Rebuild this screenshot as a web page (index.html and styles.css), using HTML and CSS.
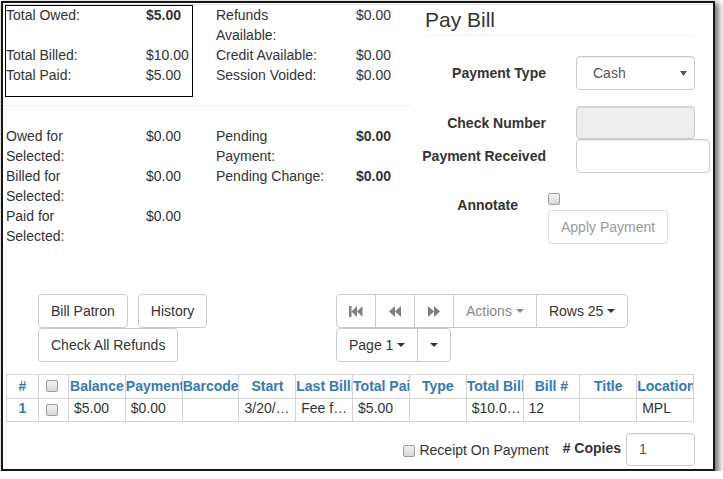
FILE: index.html
```html
<!DOCTYPE html>
<html lang="en">
<head>
<meta charset="utf-8">
<title>Pay Bill</title>
<link rel="stylesheet" href="styles.css">
</head>
<body>
<div class="frame">
  <div class="highlight"></div>
  <div class="page">
    <div class="top">
      <div class="summary">
        <div class="stats">
          <div class="lbl">Total Owed:</div><div class="val b">$5.00</div><div class="lbl">Refunds Available:</div><div class="val">$0.00</div>
          <div class="lbl">Total Billed:</div><div class="val">$10.00</div><div class="lbl">Credit Available:</div><div class="val">$0.00</div>
          <div class="lbl">Total Paid:</div><div class="val">$5.00</div><div class="lbl">Session Voided:</div><div class="val">$0.00</div>
        </div>
        <hr class="rule">
        <div class="stats">
          <div class="lbl">Owed for Selected:</div><div class="val">$0.00</div><div class="lbl">Pending Payment:</div><div class="val b">$0.00</div>
          <div class="lbl">Billed for Selected:</div><div class="val">$0.00</div><div class="lbl">Pending Change:</div><div class="val b">$0.00</div>
          <div class="lbl">Paid for Selected:</div><div class="val">$0.00</div><div></div><div></div>
        </div>
      </div>
      <div class="paybill">
        <h3 class="title">Pay Bill</h3>
        <div class="form-row row-type">
          <label>Payment Type</label>
          <div class="select"><span>Cash</span><svg width="7" height="5" viewBox="0 0 7 5"><path d="M0 0h7L3.5 5z" fill="#555"/></svg></div>
        </div>
        <div class="form-row row-check">
          <label>Check Number</label>
          <div class="input input-check"></div>
        </div>
        <div class="form-row">
          <label>Payment Received</label>
          <div class="input input-recv"></div>
        </div>
        <div class="form-row row-annot">
          <label>Annotate</label>
          <div class="annot-ctl">
            <span class="cb"></span>
            <button class="btn btn-apply">Apply Payment</button>
          </div>
        </div>
      </div>
    </div>

    <div class="toolbar">
      <div class="left-btns">
        <button class="btn">Bill Patron</button>
        <button class="btn">History</button>
        <button class="btn">Check All Refunds</button>
      </div>
      <div class="right-btns">
        <div class="btn-group">
          <button class="btn btn-icon"><svg width="14" height="11" viewBox="0 0 14 11"><rect x="0" y="0" width="2.5" height="11"/><path d="M2.5 5.5 8 0v11zM8 5.5 13.5 0v11z"/></svg></button>
          <button class="btn btn-icon"><svg width="12" height="11" viewBox="0 0 12 11"><path d="M0 5.5 6 0v11zM6 5.5 12 0v11z"/></svg></button>
          <button class="btn btn-icon"><svg width="12" height="11" viewBox="0 0 12 11"><path d="M12 5.5 6 0v11zM6 5.5 0 0v11z"/></svg></button>
          <button class="btn dis">Actions<span class="caret"></span></button>
          <button class="btn">Rows 25<span class="caret"></span></button>
        </div>
        <div class="btn-group">
          <button class="btn">Page 1<span class="caret"></span></button>
          <button class="btn btn-split"><span class="caret caret-only"></span></button>
        </div>
      </div>
    </div>

    <div class="tbl">
      <div class="th">#</div>
      <div class="th th-cb"><span class="cb"></span></div>
      <div class="th">Balance</div>
      <div class="th">Payment</div>
      <div class="th">Barcode</div>
      <div class="th">Start</div>
      <div class="th">Last Billing Type</div>
      <div class="th">Total Paid</div>
      <div class="th">Type</div>
      <div class="th">Total Billed</div>
      <div class="th">Bill #</div>
      <div class="th">Title</div>
      <div class="th">Location</div>

      <div class="td td-num">1</div>
      <div class="td td-cb"><span class="cb"></span></div>
      <div class="td">$5.00</div>
      <div class="td">$0.00</div>
      <div class="td"></div>
      <div class="td">3/20/…</div>
      <div class="td">Fee f…</div>
      <div class="td">$5.00</div>
      <div class="td"></div>
      <div class="td">$10.0…</div>
      <div class="td">12</div>
      <div class="td"></div>
      <div class="td">MPL</div>
    </div>

    <div class="foot">
      <span class="cb cb-receipt"></span>
      <span class="receipt">Receipt On Payment</span>
      <label class="copies">#&nbsp;Copies</label>
      <div class="input input-copies">1</div>
    </div>
  </div>
</div>
</body>
</html>
```

FILE: styles.css
```css
* { box-sizing: border-box; }
html, body { margin: 0; background: #fff; }
body {
  font-family: "Liberation Sans", Arial, sans-serif;
  font-size: 14px;
  line-height: 20px;
  color: #333;
}

.frame {
  position: relative;
  margin: 1px 0 0 1px;
  width: 714px;
  height: 470px;
  border: 2px solid #161616;
  background: #fff;
  box-shadow: 3px 3px 6px 1px rgba(0, 0, 0, 0.55);
}
.highlight {
  position: absolute;
  left: 2px;
  top: 2px;
  width: 188px;
  height: 92px;
  border: 1px solid #000;
  pointer-events: none;
}
.page {
  margin-top: 1px;
  border-top: 1px solid #e2e2e2;
}

/* top area */
.top { display: flex; }
.summary { flex: 0 0 407px; padding-left: 3px; }
.stats {
  display: grid;
  grid-template-columns: 140px 70px 140px 54px;
}
.stats .lbl { padding-right: 30px; }
.b { font-weight: bold; }
.rule {
  margin: 20px 0 20px -3px;
  border: 0;
  border-top: 1px solid #eee;
  height: 0;
}

.paybill { flex: 1; }
.title {
  margin: 3px 0 0 15px;
  width: 270px;
  font-size: 21px;
  font-weight: normal;
  line-height: 24px;
  padding-bottom: 3px;
  border-bottom: 1px solid #eee;
}
.form-row {
  display: grid;
  grid-template-columns: 136px 1fr;
  column-gap: 30px;
  align-items: center;
}
.form-row > label {
  font-weight: bold;
  text-align: right;
  white-space: nowrap;
}
.row-type { margin-top: 20px; }
.row-check { margin-top: 16px; }
.select {
  display: flex;
  align-items: center;
  justify-content: space-between;
  width: 119px;
  height: 34px;
  padding: 0 7px 0 16px;
  border: 1px solid #ccc;
  border-radius: 4px;
  color: #555;
  box-shadow: inset 0 1px 1px rgba(0, 0, 0, 0.075);
}
.input {
  height: 34px;
  border: 1px solid #ccc;
  border-radius: 4px;
  background: #fff;
  box-shadow: inset 0 1px 1px rgba(0, 0, 0, 0.075);
}
.input-check { width: 119px; height: 33px; background: #eee; }
.input-recv { width: 134px; }
.row-annot {
  margin-top: 20px;
  grid-template-columns: 108px 1fr;
  align-items: start;
}
.row-annot > label { margin-top: 2px; }
.annot-ctl { display: flex; flex-direction: column; align-items: flex-start; }

.cb {
  display: inline-block;
  width: 12px;
  height: 12px;
  border: 1px solid #9c9c9c;
  border-radius: 2px;
  background: linear-gradient(#f4f4f4, #d8d8d8);
}

/* buttons */
.btn {
  display: inline-flex;
  align-items: center;
  justify-content: center;
  height: 34px;
  padding: 0 12px;
  margin: 0;
  border: 1px solid #ccc;
  border-radius: 4px;
  background: #fff;
  color: #333;
  font-family: inherit;
  font-size: 14px;
  line-height: 20px;
  white-space: nowrap;
}
.btn-apply {
  margin-top: 5px;
  color: #999;
  border-color: #ddd;
}
.dis { color: #888; }
.caret {
  display: inline-block;
  width: 0;
  height: 0;
  margin-left: 4px;
  border-top: 4px solid;
  border-left: 4px solid transparent;
  border-right: 4px solid transparent;
}
.caret-only { margin-left: 0; }
.btn-split { width: 34px; padding: 0; }
.btn-icon { width: 40px; padding: 0; }
.btn-icon svg { fill: #808080; }

.btn-group { display: flex; }
.btn-group .btn + .btn { margin-left: -1px; }
.btn-group .btn:not(:first-child) { border-top-left-radius: 0; border-bottom-left-radius: 0; }
.btn-group .btn:not(:last-child) { border-top-right-radius: 0; border-bottom-right-radius: 0; }

.toolbar {
  display: flex;
  align-items: flex-start;
  margin-top: 48px;
  padding-left: 35px;
}
.left-btns {
  width: 298px;
  display: flex;
  flex-wrap: wrap;
  column-gap: 10px;
}
.right-btns {
  width: 300px;
  display: flex;
  flex-wrap: wrap;
}

/* table */
.tbl {
  margin: 12px 0 0 3px;
  width: 688px;
  display: grid;
  grid-template-columns: 32px 30px repeat(11, minmax(0, 1fr));
  border-top: 1px solid #d4d4d4;
  border-left: 1px solid #d4d4d4;
}
.th, .td {
  border-right: 1px solid #d4d4d4;
  border-bottom: 1px solid #d4d4d4;
  white-space: nowrap;
  overflow: hidden;
}
.th {
  height: 24px;
  line-height: 23px;
  font-weight: bold;
  color: #337ab7;
  text-align: center;
}
.td {
  height: 23px;
  line-height: 19px;
  padding: 0 0 0 5px;
  text-overflow: clip;
}
.th-cb, .td-cb {
  display: flex;
  align-items: center;
  justify-content: center;
  padding: 0;
}
.th-cb .cb, .td-cb .cb { margin-right: 3px; }
.th-cb .cb { margin-top: -1px; }
.td-num {
  text-align: center;
  font-weight: bold;
  color: #337ab7;
  padding: 0;
}

/* footer */
.foot {
  display: flex;
  justify-content: flex-end;
  align-items: center;
  margin-top: 11px;
  padding-right: 18px;
}
.cb-receipt { margin-top: 2px; }
.receipt { margin-left: 4px; }
.copies {
  margin: 0 5px 3px 14px;
  font-weight: bold;
}
.input-copies {
  width: 69px;
  height: 33px;
  padding-left: 12px;
  line-height: 31px;
  color: #555;
}
```
